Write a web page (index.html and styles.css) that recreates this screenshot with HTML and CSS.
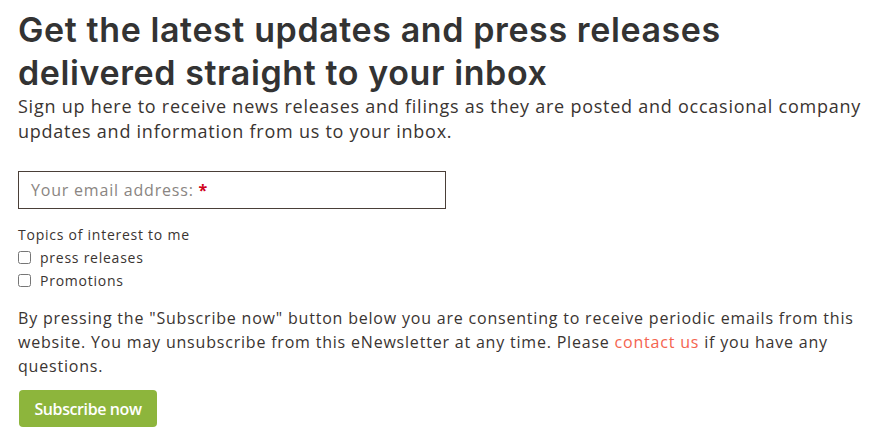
FILE: index.html
```html
<!DOCTYPE html>
<html lang="en">
<head>
<meta charset="UTF-8" />
<meta name="viewport" content="width=device-width, initial-scale=1" />
<title>Email alerts</title>
<link rel="stylesheet" href="styles.css">
</head>
<body>

<div class="signup">
  <h1>Get the latest updates and press releases delivered straight to your inbox</h1>
  <p class="intro">Sign up here to receive news releases and filings as they are posted and occasional company updates and information from us to your inbox.</p>

  <form class="signup-form" action="#" method="post">
    <div class="email-field">
      <input type="email" id="email" name="email" required />
      <label for="email" class="placeholder">Your email address: <span class="req">*</span></label>
    </div>

    <div class="topics">
      <div class="topics-title">Topics of interest to me</div>
      <label class="topic"><input type="checkbox" name="topic" value="press" /> press releases</label>
      <label class="topic"><input type="checkbox" name="topic" value="promo" /> Promotions</label>
    </div>

    <p class="consent">By pressing the "Subscribe now" button below you are consenting to receive periodic emails from this website. You may unsubscribe from this eNewsletter at any time. Please <a href="#">contact us</a> if you have any questions.</p>

    <button type="submit">Subscribe now</button>
  </form>
</div>

</body>
</html>
```
FILE: styles.css
```css
body {
  margin: 0;
  background-color: #fff;
  font-family: "Open Sans", sans-serif;
  color: #3a3431;
}
.signup {
  padding: 8px 18px;
  width: 850px;
}
h1 {
  margin: 0;
  max-width: 760px;
  font-family: Inter, sans-serif;
  font-weight: 600;
  font-size: 34px;
  line-height: 43px;
  letter-spacing: 0.6px;
  color: #333;
}
.intro {
  margin: 0;
  font-size: 18px;
  line-height: 25px;
  letter-spacing: 0.75px;
}
.signup-form {
  margin-top: 27px;
}
.email-field {
  position: relative;
  width: 428px;
}
.email-field input {
  box-sizing: border-box;
  display: block;
  width: 100%;
  height: 38px;
  border: 1px solid #4a3f38;
  padding: 0 12px;
  font-family: "Open Sans", sans-serif;
  font-size: 16px;
}
.placeholder {
  position: absolute;
  left: 13px;
  top: 8px;
  font-size: 16px;
  letter-spacing: 0.8px;
  color: #8a8582;
  pointer-events: none;
}
.req {
  color: #d0021b;
  font-weight: 700;
}
.topics {
  margin-top: 14px;
  font-size: 14px;
  line-height: 23px;
  letter-spacing: 0.75px;
}
.topic {
  display: flex;
  align-items: center;
}
.topic input {
  margin: 0 9px 0 0;
  width: 13px;
  height: 13px;
}
.consent {
  margin: 14px 0 0;
  font-size: 16px;
  line-height: 24px;
  letter-spacing: 0.8px;
}
.consent a {
  color: #f4644f;
  text-decoration: none;
}
button {
  display: block;
  margin-top: 12px;
  margin-left: 1px;
  width: 138px;
  height: 37px;
  background-color: #8db53c;
  color: #fff;
  border: none;
  border-radius: 4px;
  padding: 0;
  font-family: "Open Sans", sans-serif;
  font-size: 16px;
  font-weight: 600;
  letter-spacing: -0.4px;
  cursor: pointer;
}
```
